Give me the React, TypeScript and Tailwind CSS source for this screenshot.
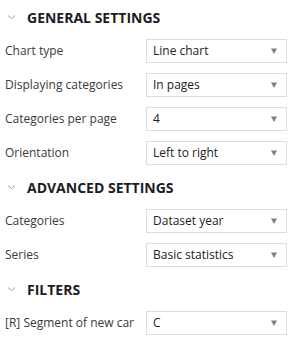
import React from "react";

function Chevron() {
  return (
    <svg width="9" height="6" viewBox="0 0 9 6" className="shrink-0">
      <path d="M1 1.5 L4.5 4.5 L8 1.5" fill="none" stroke="#a0a0a0" strokeWidth="1" />
    </svg>
  );
}

function Header({ title }: { title: string }) {
  return (
    <div className="flex h-[34px] items-center pl-[7px]">
      <Chevron />
      <span className="ml-[11px] text-[14px] font-bold uppercase text-[#1c1c24]">{title}</span>
    </div>
  );
}

function Row({ label, value }: { label: string; value: string }) {
  return (
    <div className="flex h-[34px] items-center">
      <div className="w-[146px] pl-[5px] text-[12px] text-[#3a3a3a]">{label}</div>
      <div className="flex h-[24px] w-[141px] items-center justify-between border border-[#dedede] bg-white pl-[6px] pr-[9px] text-[12px] text-[#222]">
        <span>{value}</span>
        <svg width="6" height="6" viewBox="0 0 6 6">
          <path d="M0 0.5 H6 L3 6 Z" fill="#808080" />
        </svg>
      </div>
    </div>
  );
}

export default function App() {
  return (
    <div className="h-[346px] w-[298px] bg-white" style={{ fontFamily: '"Open Sans", sans-serif' }}>
      <Header title="General settings" />
      <Row label="Chart type" value="Line chart" />
      <Row label="Displaying categories" value="In pages" />
      <Row label="Categories per page" value="4" />
      <Row label="Orientation" value="Left to right" />
      <Header title="Advanced settings" />
      <Row label="Categories" value="Dataset year" />
      <Row label="Series" value="Basic statistics" />
      <Header title="Filters" />
      <Row label="[R] Segment of new car" value="C" />
    </div>
  );
}
